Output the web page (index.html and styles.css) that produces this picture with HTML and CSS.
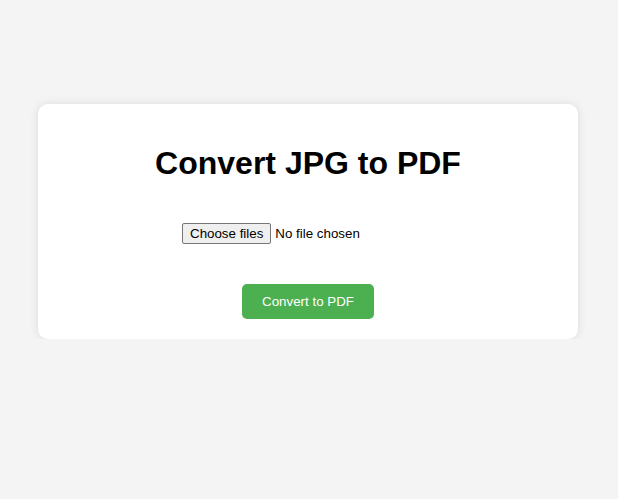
FILE: index.html
```html
<!DOCTYPE html>
<html lang="en">
<head>
<meta charset="utf-8">
<title>Convert JPG to PDF</title>
<link rel="stylesheet" href="styles.css">
</head>
<body>
  <main class="card">
    <h1 class="title">Convert JPG to PDF</h1>
    <label class="file-picker">
      <input class="file-native" type="file" accept="image/jpeg" multiple>
      <span class="file-btn">Choose files</span>
      <span class="file-status">No file chosen</span>
    </label>
    <button class="convert-btn" type="button">Convert to PDF</button>
  </main>
</body>
</html>
```

FILE: styles.css
```css
html, body {
  margin: 0;
  padding: 0;
}

body {
  background: #f4f4f4;
  font-family: "Liberation Sans", Arial, sans-serif;
  padding: 104px 2px 0 0;
}

.card {
  box-sizing: border-box;
  width: 540px;
  margin: 0 auto;
  background: #ffffff;
  border-radius: 10px;
  box-shadow: 0 0 10px rgba(0, 0, 0, 0.1);
  padding: 20px;
  display: flex;
  flex-direction: column;
  align-items: center;
}

.title {
  font-size: 32px;
  font-weight: bold;
  margin: 21.44px 0;
  color: #000;
}

.file-picker {
  width: 252px;
  margin-top: 19px;
  display: flex;
  align-items: center;
  gap: 4px;
  font-size: 13.333px;
  color: #000;
  cursor: default;
}

.file-native {
  position: absolute;
  width: 1px;
  height: 1px;
  opacity: 0;
  overflow: hidden;
}

.file-btn {
  background: #efefef;
  border: 1px solid #767676;
  border-radius: 2px;
  padding: 2px 7px;
  line-height: 15px;
}

.file-status {
  line-height: 15px;
}

.convert-btn {
  font-family: "Liberation Sans", Arial, sans-serif;
  font-size: 13.333px;
  margin-top: 40px;
  padding: 10px 20px;
  background: #4caf50;
  color: #ffffff;
  border: none;
  border-radius: 5px;
  cursor: pointer;
}
```
